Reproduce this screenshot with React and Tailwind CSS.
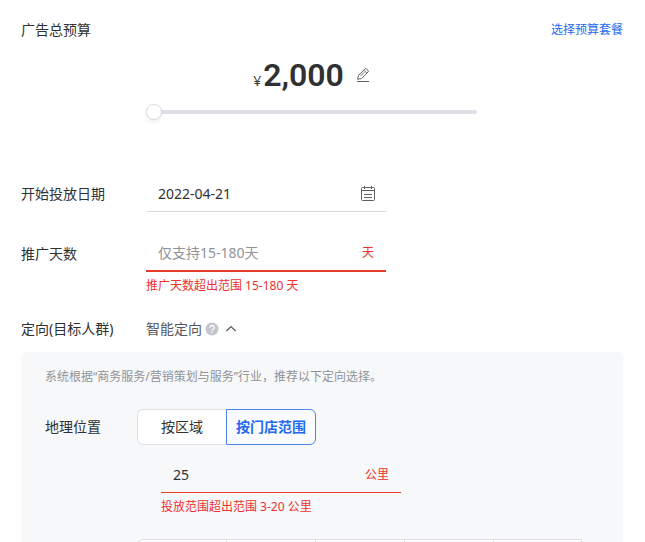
import { useState } from "react";

const audienceOptions = [1, 2, 3, 4, 5];

function PencilIcon() {
  return (
    <svg width="14" height="16" viewBox="0 0 14 16" fill="none" stroke="#606266" aria-hidden="true">
      <path d="M1.500 12.200 2.500 8.400 8.900 2a1.200 1.200 0 0 1 1.700 0l1.400 1.400a1.200 1.200 0 0 1 0 1.700L5.500 11.500 1.500 12.200Z" />
      <path d="m7.900 3.200 2.800 2.800M4.600 8.900 8.200 5.300" />
      <path d="M1 14.500h12" />
    </svg>
  );
}

function CalendarIcon() {
  return (
    <svg width="16" height="16" viewBox="0 0 16 16" fill="none" stroke="#606266" aria-hidden="true">
      <path d="M2.500 1.500h11a1 1 0 0 1 1 1v11a1 1 0 0 1-1 1h-11a1 1 0 0 1-1-1v-11a1 1 0 0 1 1-1Z" />
      <path d="M4.500 0v3M11.500 0v3M1.500 4.500h13M4 8.500h8M4 11.500h8" />
    </svg>
  );
}

function HelpIcon() {
  return (
    <svg width="14" height="14" viewBox="0 0 14 14" fill="none" aria-hidden="true">
      <circle cx="7" cy="7" r="6.500" fill="#c3c6cc" />
      <path d="M5 5.600a2 2 0 1 1 3.200 1.500C7.400 7.700 7 8 7 8.800" stroke="#fff" strokeWidth="1.300" />
      <circle cx="7" cy="10.500" r="0.800" fill="#fff" />
    </svg>
  );
}

function ChevronUpIcon() {
  return (
    <svg width="12" height="12" viewBox="0 0 12 12" fill="none" stroke="#55585e" strokeWidth="1.200" aria-hidden="true">
      <path d="M1.500 8 6 3.500 10.500 8" />
    </svg>
  );
}

function FormRow({ label, htmlFor, children }) {
  return (
    <div className="flex">
      <label htmlFor={htmlFor} className="flex h-9 w-[125px] shrink-0 items-center">
        {label}
      </label>
      <div className="w-60">{children}</div>
    </div>
  );
}

export default function App() {
  const [budget, setBudget] = useState(2000);
  const [date, setDate] = useState("2022-04-21");
  const [days, setDays] = useState("");
  const [radius, setRadius] = useState("25");

  return (
    <main className="h-screen overflow-hidden bg-white pt-5 pr-[22px] pl-[21px] font-['Noto_Sans','Noto_Sans_CJK_SC',sans-serif] text-sm leading-5 text-[#303133]">
      <header className="flex h-5 items-center justify-between">
        <label htmlFor="budget">广告总预算</label>
        <a href="#packages" className="text-xs leading-5 text-[#2468f2]">
          选择预算套餐
        </a>
      </header>

      <section className="mt-[15px] ml-[125px] max-w-[331px]">
        <div className="flex h-10 items-center justify-center">
          <div className="flex items-baseline gap-0.5">
            <span>¥</span>
            <span className="font-[Roboto,sans-serif] text-[32px] leading-10 font-semibold">
              {budget.toLocaleString("en-US")}
            </span>
          </div>
          <button type="button" aria-label="修改预算" className="ml-3">
            <PencilIcon />
          </button>
        </div>
        <input
          id="budget"
          type="range"
          min="2000"
          max="100000"
          step="100"
          value={budget}
          onChange={(e) => setBudget(Number(e.target.value))}
          className="mt-[9px] block h-4 w-full appearance-none bg-transparent [&::-webkit-slider-runnable-track]:h-1 [&::-webkit-slider-runnable-track]:rounded-sm [&::-webkit-slider-runnable-track]:bg-[#e0e0e6] [&::-webkit-slider-thumb]:-mt-1.5 [&::-webkit-slider-thumb]:size-4 [&::-webkit-slider-thumb]:appearance-none [&::-webkit-slider-thumb]:rounded-full [&::-webkit-slider-thumb]:border [&::-webkit-slider-thumb]:border-[#dcdde3] [&::-webkit-slider-thumb]:bg-white [&::-webkit-slider-thumb]:shadow-[0_2px_4px_rgba(0,0,0,0.08)]"
        />
      </section>

      <div className="mt-14 flex flex-col gap-6">
        <FormRow label="开始投放日期" htmlFor="start-date">
          <div className="flex h-9 items-center border-b border-[#dcdde0] pr-2.5 pl-3">
            <input
              id="start-date"
              value={date}
              onChange={(e) => setDate(e.target.value)}
              className="min-w-0 flex-1 bg-transparent outline-none"
            />
            <CalendarIcon />
          </div>
        </FormRow>

        <FormRow label="推广天数" htmlFor="days">
          <div className="flex h-9 items-center border-b-2 border-[#e63c2e] px-3">
            <input
              id="days"
              value={days}
              placeholder="仅支持15-180天"
              onChange={(e) => setDays(e.target.value)}
              className="min-w-0 flex-1 bg-transparent outline-none placeholder:text-[#919399]"
            />
            <span className="text-xs text-[#f0302d]">天</span>
          </div>
          <p className="mt-1 text-xs leading-5 text-[#f0302d]">推广天数超出范围 15-180 天</p>
        </FormRow>
      </div>

      <div className="mt-[23px] flex h-5 items-center">
        <span className="w-[125px] shrink-0">定向(目标人群)</span>
        <button type="button" aria-expanded="true" className="flex items-center text-[#55585e]">
          智能定向
          <span className="mr-1.5 ml-[3px]">
            <HelpIcon />
          </span>
          <ChevronUpIcon />
        </button>
      </div>

      <section className="mt-[13px] rounded-md bg-[#f7f8fa] px-6 pt-[15px] pb-6">
        <p className="text-xs leading-5 text-[#919399]">
          系统根据“商务服务/营销策划与服务”行业，推荐以下定向选择。
        </p>

        <div className="mt-[22px] flex items-center">
          <span className="w-[92px] shrink-0">地理位置</span>
          <div className="flex">
            <button type="button" className="h-9 w-[89px] rounded-l-md border border-r-0 border-[#dfe0e6] bg-white">
              按区域
            </button>
            <button
              type="button"
              aria-pressed="true"
              className="h-9 w-[90px] rounded-r-md border border-[#4e85ea] bg-[#fafbff] font-bold text-[#2468f2]"
            >
              按门店范围
            </button>
          </div>
        </div>

        <div className="mt-3 ml-[116px] max-w-60">
          <div className="flex h-9 items-center border-b border-[#e63c2e] px-3">
            <input
              aria-label="门店范围"
              value={radius}
              onChange={(e) => setRadius(e.target.value)}
              className="min-w-0 flex-1 bg-transparent outline-none"
            />
            <span className="text-xs text-[#f0302d]">公里</span>
          </div>
          <p className="mt-1 text-xs leading-5 text-[#f0302d]">投放范围超出范围 3-20 公里</p>
        </div>

        <div className="mt-[22px] ml-[92px] flex">
          {audienceOptions.map((option) => (
            <button
              key={option}
              type="button"
              aria-label={`选项 ${option}`}
              className="h-9 w-[89px] shrink-0 border border-r-0 border-[#dfe0e6] bg-white first:rounded-l-md last:border-r"
            />
          ))}
        </div>
      </section>
    </main>
  );
}
